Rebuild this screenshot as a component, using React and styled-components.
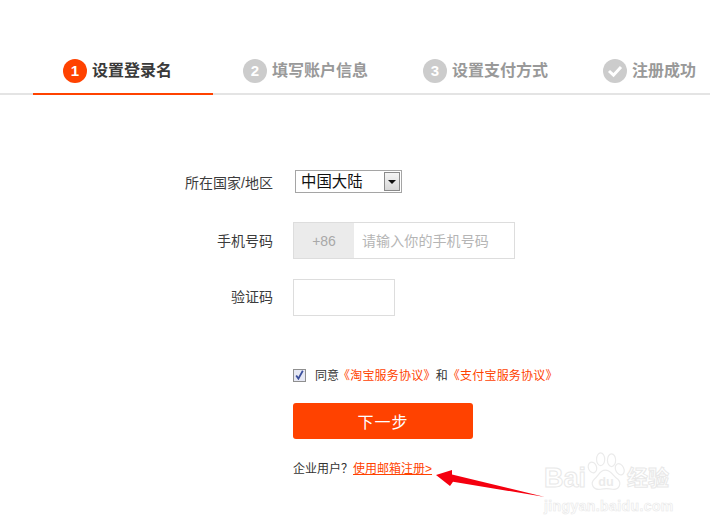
import styled, { createGlobalStyle } from "styled-components";

const ORANGE = "#ff4200";
const CJK = `"Liberation Sans", "Noto Sans CJK SC", sans-serif`;

const steps = [
  { mark: "1", label: "设置登录名", active: true },
  { mark: "2", label: "填写账户信息" },
  { mark: "3", label: "设置支付方式" },
  { check: true, label: "注册成功" },
];

export default function App() {
  return (
    <>
      <GlobalStyle />
      <Page>
        <StepBar>
          {steps.map((step) => (
            <Step key={step.label} $active={step.active}>
              <StepMark $active={step.active}>
                {step.check ? (
                  <svg width="16" height="14" viewBox="0 0 16 14">
                    <path d="M2 7 L6.5 11.2 L14 3" fill="none" stroke="#fff" strokeWidth="3" />
                  </svg>
                ) : (
                  step.mark
                )}
              </StepMark>
              {step.label}
            </Step>
          ))}
        </StepBar>

        <Form>
          <SelectRow>
            <Label>所在国家/地区</Label>
            <FakeSelect>
              <SelectValue>中国大陆</SelectValue>
              <SelectButton>
                <SelectArrow />
              </SelectButton>
            </FakeSelect>
          </SelectRow>

          <FieldRow>
            <Label $lift={2}>手机号码</Label>
            <PhoneBox>
              <Prefix>+86</Prefix>
              <PhoneInput placeholder="请输入你的手机号码" />
            </PhoneBox>
          </FieldRow>

          <CodeRow>
            <Label $lift={4}>验证码</Label>
            <CodeInput />
          </CodeRow>

          <Actions>
            <AgreeRow>
              <CheckBox>
                <svg width="9" height="10" viewBox="0 0 9 10">
                  <path d="M1.2 5.4 L3.4 8.6 L7.8 0.8" fill="none" stroke="#3b4f9c" strokeWidth="1.8" />
                </svg>
              </CheckBox>
              <AgreeText>同意</AgreeText>
              <AgreeLinks>
                <Orange>《淘宝服务协议》</Orange>和<Orange>《支付宝服务协议》</Orange>
              </AgreeLinks>
            </AgreeRow>
            <NextButton>下一步</NextButton>
            <CompanyLine>
              企业用户？<EmailLink>使用邮箱注册&gt;</EmailLink>
            </CompanyLine>
          </Actions>
        </Form>

        <Arrow width="112" height="30" viewBox="0 0 112 30">
          <path d="M1 6 L17 1 L17 5.500 L110 28 L18 12.700 L15 17 Z" fill="#f5000f" />
        </Arrow>

        <Watermark>
          <WatermarkTop>
            <BrandText>Bai</BrandText>
            <svg width="40" height="42" viewBox="0 0 44 44">
              <g fill="#fff" stroke="#ebebeb" strokeWidth="1.3">
                <ellipse cx="6" cy="17" rx="4.500" ry="6" transform="rotate(-20 6 17)" />
                <ellipse cx="15" cy="8" rx="4.500" ry="7" />
                <ellipse cx="27" cy="9" rx="4.500" ry="7" />
                <ellipse cx="36" cy="19" rx="4.500" ry="6.500" transform="rotate(-25 36 19)" />
                <path d="M20 20 C14 20 13 26 8 30 C3 35 7 42 15 41 C19 40 24 40 28 41 C36 42 38 34 34 30 C28 26 27 20 20 20 Z" />
              </g>
              <text x="21" y="37" fontSize="14" fontWeight="700" textAnchor="middle" fill="#ebebeb" fontFamily="Liberation Sans">du</text>
            </svg>
            <BrandCn>经验</BrandCn>
          </WatermarkTop>
          <WatermarkUrl>jingyan.baidu.com</WatermarkUrl>
        </Watermark>
      </Page>
    </>
  );
}

const GlobalStyle = createGlobalStyle`
  html, body {
    margin: 0;
    background: #fff;
  }
  body {
    font-family: ${CJK};
    color: #333;
  }
`;

const Page = styled.div`
  position: relative;
  width: 710px;
  height: 528px;
  overflow: hidden;
  padding-top: 53px;
  box-sizing: border-box;
`;

const StepBar = styled.div`
  display: flex;
  height: 42px;
  box-sizing: border-box;
  padding-left: 33px;
  border-bottom: 2px solid #e4e4e4;
`;

const Step = styled.div`
  flex: none;
  width: 180px;
  height: 42px;
  box-sizing: border-box;
  display: flex;
  align-items: flex-start;
  gap: 5px;
  padding: 6px 0 0 30px;
  font-size: 16px;
  font-weight: 700;
  line-height: 24px;
  color: ${(p) => (p.$active ? "#3a3a3a" : "#999")};
  border-bottom: 2px solid ${(p) => (p.$active ? ORANGE : "transparent")};
`;

const StepMark = styled.span`
  flex: none;
  width: 24px;
  height: 24px;
  border-radius: 50%;
  background: ${(p) => (p.$active ? ORANGE : "#ccc")};
  color: #fff;
  font-size: 15px;
  font-weight: 700;
  display: flex;
  align-items: center;
  justify-content: center;
`;

const Form = styled.div`
  display: flex;
  flex-direction: column;
  padding-top: 75px;
`;

const FieldRow = styled.div`
  display: flex;
  align-items: center;
  gap: 20px;
  height: 37px;
`;

const SelectRow = styled(FieldRow)`
  height: 23px;
  gap: 22px;
  margin-bottom: 29px;
`;

const CodeRow = styled(FieldRow)`
  margin-top: 20px;
  margin-bottom: 52px;
`;

const Label = styled.label`
  flex: none;
  width: 273px;
  text-align: right;
  font-size: 14px;
  color: #3c3c3c;
  padding-bottom: ${(p) => p.$lift || 0}px;
`;

const FakeSelect = styled.div`
  width: 107px;
  height: 23px;
  box-sizing: border-box;
  border: 1px solid #a5a5a5;
  display: flex;
  align-items: center;
  justify-content: space-between;
  padding: 0 1px 0 5px;
  background: #fff;
`;

const SelectValue = styled.span`
  font-size: 15.400px;
  color: #111;
  padding-bottom: 3px;
`;

const SelectButton = styled.span`
  width: 16px;
  height: 19px;
  box-sizing: border-box;
  border: 1px solid #8a8a8a;
  background: linear-gradient(#f4f4f4, #d8d8d8);
  display: flex;
  align-items: center;
  justify-content: center;
`;

const SelectArrow = styled.span`
  width: 0;
  height: 0;
  border-left: 4px solid transparent;
  border-right: 4px solid transparent;
  border-top: 4px solid #111;
`;

const PhoneBox = styled.div`
  width: 222px;
  height: 37px;
  box-sizing: border-box;
  border: 1px solid #ddd;
  display: flex;
`;

const Prefix = styled.span`
  flex: none;
  width: 60px;
  background: #ebebeb;
  color: #a8a8a8;
  font-size: 14px;
  display: flex;
  align-items: center;
  justify-content: center;
`;

const PhoneInput = styled.input`
  flex: 1;
  min-width: 0;
  border: none;
  outline: none;
  padding: 0 0 0 8px;
  font-family: ${CJK};
  font-size: 14px;
  letter-spacing: 0.1px;
  &::placeholder {
    color: #b5b5b5;
    opacity: 1;
  }
`;

const CodeInput = styled.input`
  width: 102px;
  height: 37px;
  box-sizing: border-box;
  border: 1px solid #ddd;
  outline: none;
`;

const Actions = styled.div`
  display: flex;
  flex-direction: column;
  align-items: flex-start;
  padding-left: 293px;
`;

const AgreeRow = styled.div`
  display: flex;
  align-items: center;
  height: 14px;
  font-size: 12px;
  color: #333;
`;

const CheckBox = styled.span`
  width: 13px;
  height: 13px;
  box-sizing: border-box;
  border: 1px solid #8f8f8f;
  background: #e6e8f4;
  margin-right: 9px;
  display: flex;
  align-items: center;
  justify-content: center;
`;

const AgreeText = styled.span`
  padding-bottom: 2px;
`;

const AgreeLinks = styled.span`
  margin-left: -1px;
  padding-bottom: 2px;
  letter-spacing: 0.2px;
`;

const Orange = styled.span`
  color: ${ORANGE};
`;

const NextButton = styled.button`
  width: 180px;
  height: 36px;
  margin-top: 21px;
  border: none;
  border-radius: 3px;
  background: ${ORANGE};
  color: #fff;
  font-family: ${CJK};
  font-size: 16px;
  letter-spacing: 1px;
`;

const CompanyLine = styled.div`
  margin-top: 22px;
  font-size: 12px;
  line-height: 16px;
  color: #333;
`;

const EmailLink = styled.a`
  color: ${ORANGE};
  text-decoration: underline;
`;

const Arrow = styled.svg`
  position: absolute;
  left: 435px;
  top: 469px;
`;

const Watermark = styled.div`
  position: absolute;
  left: 544px;
  top: 451px;
  color: #fff;
  -webkit-text-stroke: 1px #e8e8e8;
`;

const WatermarkTop = styled.div`
  display: flex;
  align-items: flex-end;
  height: 42px;
`;

const BrandText = styled.span`
  font-size: 27px;
  font-weight: 700;
  line-height: 30px;
  margin-right: 1px;
`;

const BrandCn = styled.span`
  font-size: 21px;
  font-weight: 700;
  line-height: 30px;
`;

const WatermarkUrl = styled.div`
  font-size: 14px;
  font-weight: 700;
  line-height: 18px;
  letter-spacing: 0.4px;
  margin-top: 4px;
  -webkit-text-stroke: 0.6px #e8e8e8;
`;
